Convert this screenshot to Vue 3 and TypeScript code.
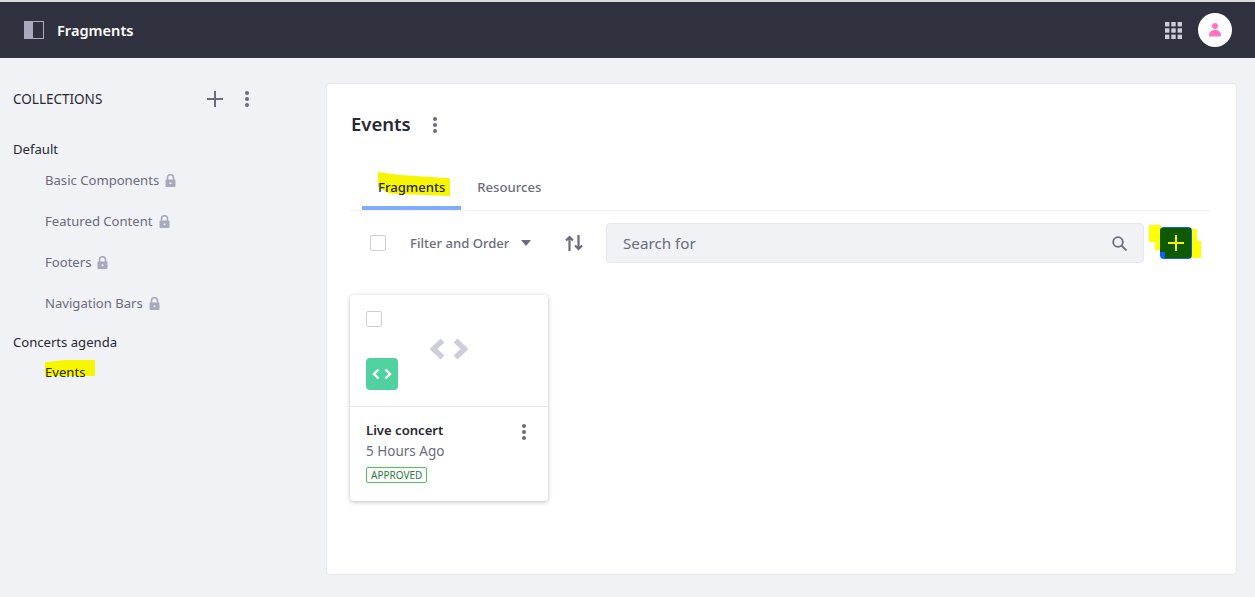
<template>
  <div class="page">
    <header class="topbar">
      <div class="topbar-left">
        <svg class="panel-icon" width="20" height="18" viewBox="0 0 20 18">
          <rect x="0" y="0" width="9" height="18" fill="#a7a9bc" />
          <rect x="0.5" y="0.5" width="19" height="17" fill="none" stroke="#a7a9bc" />
        </svg>
        <span class="topbar-title">Fragments</span>
      </div>
      <div class="topbar-right">
        <svg width="17" height="17" viewBox="0 0 17 17" fill="#cdced9">
          <template v-for="y in [0, 6.3, 12.6]" :key="y">
            <rect v-for="x in [0, 6.3, 12.6]" :key="x" :x="x" :y="y" width="4.4" height="4.4" />
          </template>
        </svg>
        <div class="avatar">
          <svg width="16" height="16" viewBox="0 0 16 16" fill="#ff73c3">
            <circle cx="8" cy="4" r="3" />
            <path d="M2 13c0-3 2.500-5 6-5s6 2 6 5c0 1-1 1.500-2 1.500H4c-1 0-2-.5-2-1.500z" />
          </svg>
        </div>
      </div>
    </header>

    <div class="content">
      <aside class="sidebar">
        <div class="side-head">
          <span class="side-title">COLLECTIONS</span>
          <svg class="side-plus" width="16" height="16" viewBox="0 0 16 16">
            <path d="M8 0v16M0 8h16" stroke="#6b6c7e" stroke-width="2" />
          </svg>
          <svg class="side-dots" width="4" height="16" viewBox="0 0 4 16" fill="#6b6c7e">
            <circle cx="2" cy="2" r="2" />
            <circle cx="2" cy="8" r="2" />
            <circle cx="2" cy="14" r="2" />
          </svg>
        </div>

        <div class="group-name">Default</div>
        <div v-for="item in defaultItems" :key="item" class="side-item">
          <span>{{ item }}</span>
          <svg width="11" height="13" viewBox="0 0 11 13">
            <path d="M2.500 6V3.700a3 3 0 0 1 6 0V6" fill="none" stroke="#a7a9bc" stroke-width="1.600" />
            <rect x="0.500" y="5.500" width="10" height="7.500" rx="1" fill="#a7a9bc" />
            <circle cx="5.500" cy="9.200" r="1" fill="#f1f2f5" />
          </svg>
        </div>

        <div class="group-name second">Concerts agenda</div>
        <div class="side-item active">
          <span class="marker side-marker"></span>
          <span class="side-active-text">Events</span>
        </div>
      </aside>

      <main class="panel">
        <div class="panel-head">
          <h1>Events</h1>
          <svg width="4" height="16" viewBox="0 0 4 16" fill="#6b6c7e">
            <circle cx="2" cy="2" r="2" />
            <circle cx="2" cy="8" r="2" />
            <circle cx="2" cy="14" r="2" />
          </svg>
        </div>

        <nav class="tabs">
          <div class="tab current">
            <span class="marker tab-marker"></span>
            <span class="tab-text">Fragments</span>
          </div>
          <div class="tab">Resources</div>
        </nav>

        <div class="toolbar">
          <span class="checkbox"></span>
          <span class="filter">Filter and Order</span>
          <span class="caret"></span>
          <svg class="sort" width="18" height="18" viewBox="0 0 18 18" fill="none" stroke="#6b6c7e" stroke-width="2.200">
            <path d="M4.500 17V2.500M1 6.500l3.500-3.500 3.500 3.500" />
            <path d="M13.500 1v14.500M10 11.500l3.500 3.500 3.500-3.500" />
          </svg>
          <div class="search">
            <span>Search for</span>
            <svg width="15" height="15" viewBox="0 0 15 15" fill="none" stroke="#6b6c7e" stroke-width="1.800">
              <circle cx="6" cy="6" r="4.800" />
              <path d="M9.500 9.500l5 5" />
            </svg>
          </div>
          <div class="add-wrap">
            <svg class="add-marker" width="52" height="33" viewBox="0 0 52 33" fill="#ffff00">
              <path d="M0 0h12v25H6v-8H0z" />
              <path d="M43 4h5v12h4v17H43z" />
            </svg>
            <div class="add-btn">
              <div class="add-fill"></div>
              <svg class="add-plus" width="16" height="16" viewBox="0 0 16 16">
                <path d="M8 0v16M0 8h16" stroke="#f6f600" stroke-width="2" />
              </svg>
            </div>
          </div>
        </div>

        <article class="card">
          <div class="card-top">
            <span class="checkbox"></span>
            <svg class="big-code" width="38" height="22" viewBox="0 0 38 22" fill="none" stroke="#cdced9" stroke-width="5.500">
              <path d="M12.500 2.500L3.500 11l9 8.500" />
              <path d="M25.500 2.500l9 8.500-9 8.500" />
            </svg>
            <div class="code-badge">
              <svg width="20" height="12" viewBox="0 0 20 12" fill="none" stroke="#fff" stroke-width="2.400">
                <path d="M6.500 1.500L2 6l4.500 4.500" />
                <path d="M13.500 1.500L18 6l-4.500 4.500" />
              </svg>
            </div>
          </div>
          <div class="card-body">
            <div class="card-row">
              <div class="card-name">Live concert</div>
              <svg width="6" height="16" viewBox="0 0 6 16" fill="#6b6c7e">
                <circle cx="3" cy="2" r="2" />
                <circle cx="3" cy="8" r="2" />
                <circle cx="3" cy="14" r="2" />
              </svg>
            </div>
            <div class="card-time">5 Hours Ago</div>
            <span class="status">APPROVED</span>
          </div>
        </article>
      </main>
    </div>
  </div>
</template>

<script setup lang="ts">
const defaultItems: string[] = ['Basic Components', 'Featured Content', 'Footers', 'Navigation Bars']
</script>

<style>
body {
  margin: 0;
  background: #f1f2f5;
}
</style>

<style scoped>
.page {
  height: 597px;
  overflow: hidden;
  display: flex;
  flex-direction: column;
  background: #f1f2f5;
  font-family: "Noto Sans", "Open Sans", sans-serif;
  font-size: 13.1px;
  color: #272833;
}

.topbar {
  height: 56px;
  flex: none;
  border-top: 2px solid #d9d9d9;
  background: #30313f;
  display: flex;
  align-items: center;
  justify-content: space-between;
  padding: 0 23px 0 24px;
}

.topbar-left,
.topbar-right {
  display: flex;
  align-items: center;
}

.topbar-title {
  margin-left: 13px;
  font-size: 14.600px;
  font-weight: 600;
  color: #fff;
}

.topbar-right {
  gap: 16px;
}

.avatar {
  width: 34px;
  height: 34px;
  border-radius: 50%;
  background: #fff;
  display: flex;
  align-items: center;
  justify-content: center;
}

.content {
  flex: 1;
  display: flex;
  min-height: 0;
}

.sidebar {
  width: 326px;
  flex: none;
  box-sizing: border-box;
  padding: 32px 0 0 13px;
}

.side-head {
  height: 18px;
  display: flex;
  align-items: center;
}

.side-title {
  width: 194px;
  font-size: 13.500px;
}

.side-plus {
  margin-right: 22px;
}

.group-name {
  margin-top: 32px;
  height: 18px;
  line-height: 18px;
}

.group-name.second {
  margin-top: -2px;
}

.side-item {
  position: relative;
  height: 18px;
  margin: 13px 0 23px 32px;
  display: flex;
  align-items: center;
  gap: 6px;
  color: #6b6c7e;
}

.side-item.active {
  margin: 12px 0 0 32px;
  color: #272833;
}

.side-active-text,
.tab-text {
  position: relative;
}

.marker {
  position: absolute;
  background: #f6f600;
}

.side-marker {
  left: 0;
  top: -3px;
  width: 50px;
  height: 16px;
  clip-path: polygon(0 14%, 40% 0, 100% 0, 100% 100%, 0 100%);
}

.panel {
  width: 911px;
  height: 492px;
  flex: none;
  box-sizing: border-box;
  margin-top: 25px;
  padding: 0 25px 0 23px;
  background: #fff;
  border: 1px solid #e7e7ed;
  border-radius: 4px;
}

.panel-head {
  height: 24px;
  margin-top: 28px;
  display: flex;
  align-items: center;
  gap: 22px;
}

.panel-head h1 {
  margin: -2px 0 0 1px;
  font-size: 18.500px;
  font-weight: 600;
  color: #272833;
}

.panel-head svg {
  margin-top: 2px;
}

.tabs {
  height: 43px;
  margin-top: 31px;
  padding-left: 12px;
  border-bottom: 1px solid #f1f2f5;
  display: flex;
  font-weight: 500;
  color: #6b6c7e;
}

.tab {
  position: relative;
  padding: 11px 16px 0;
  font-weight: 500;
}

.tab.current {
  color: #272833;
  border-bottom: 4px solid #80acff;
  height: 43px;
  box-sizing: border-box;
}

.tab-marker {
  left: 16px;
  top: 5px;
  width: 72px;
  height: 24px;
  clip-path: polygon(0 0, 30% 12%, 100% 26%, 100% 100%, 15% 90%, 0 60%);
}

.toolbar {
  height: 40px;
  margin-top: 12px;
  padding-left: 20px;
  display: flex;
  align-items: center;
}

.checkbox {
  display: block;
  width: 14px;
  height: 14px;
  flex: none;
  background: #fff;
  border: 1px solid #cdced9;
  border-radius: 2px;
}

.filter {
  width: 100px;
  margin-left: 24px;
  font-weight: 500;
  color: #6b6c7e;
  white-space: nowrap;
}

.caret {
  margin-left: 11px;
  border-left: 5.500px solid transparent;
  border-right: 5.500px solid transparent;
  border-top: 6px solid #6b6c7e;
}

.sort {
  margin-left: 34px;
}

.search {
  width: 538px;
  height: 40px;
  flex: none;
  margin-left: 23px;
  box-sizing: border-box;
  padding: 0 16px;
  background: #f1f2f5;
  border: 1px solid #e7e7ed;
  border-radius: 4px;
  display: flex;
  align-items: center;
  justify-content: space-between;
  font-size: 15.200px;
  color: #6b6c7e;
}

.add-wrap {
  position: relative;
  margin-left: 16px;
  width: 32px;
  height: 32px;
  flex: none;
}

.add-marker {
  position: absolute;
  left: -11px;
  top: -2px;
}

.add-btn {
  position: absolute;
  inset: 0;
  border-radius: 4px;
  background: #0b5fff;
  display: flex;
  align-items: center;
  justify-content: center;
}

.add-fill {
  position: absolute;
  inset: 1px 1px 1px 0;
  border-radius: 3px 0 0 0;
  background: #0f5a00;
  clip-path: polygon(0 0, 100% 0, 100% 100%, 16% 100%, 16% 80%, 0 80%);
}

.add-plus {
  position: relative;
}

.card {
  width: 198px;
  height: 206px;
  margin-top: 32px;
  border-radius: 4px;
  background: #fff;
  box-shadow: 0 1px 4px rgba(39, 40, 51, 0.3);
}

.card-top {
  position: relative;
  height: 112px;
  box-sizing: border-box;
  padding: 16px;
  border-bottom: 1px solid #e7e7ed;
}

.big-code {
  position: absolute;
  left: 80px;
  top: 43px;
}

.code-badge {
  position: absolute;
  left: 16px;
  top: 63px;
  width: 32px;
  height: 32px;
  border-radius: 4px;
  background: #50d2a0;
  display: flex;
  align-items: center;
  justify-content: center;
}

.card-body {
  padding: 14px 16px 0;
}

.card-row {
  display: flex;
  align-items: flex-start;
  justify-content: space-between;
  padding-right: 6px;
}

.card-name {
  font-weight: 600;
  line-height: 18px;
  color: #272833;
}

.card-row svg {
  margin-top: 3px;
  margin-right: -1px;
}

.card-time {
  margin-top: 1px;
  line-height: 20px;
  font-size: 13.500px;
  color: #6b6c7e;
}

.status {
  display: inline-block;
  margin-top: 6px;
  padding: 0 4px;
  border: 1px solid #4fc35b;
  border-radius: 2px;
  font-size: 10px;
  line-height: 14px;
  color: #287d3c;
}
</style>
